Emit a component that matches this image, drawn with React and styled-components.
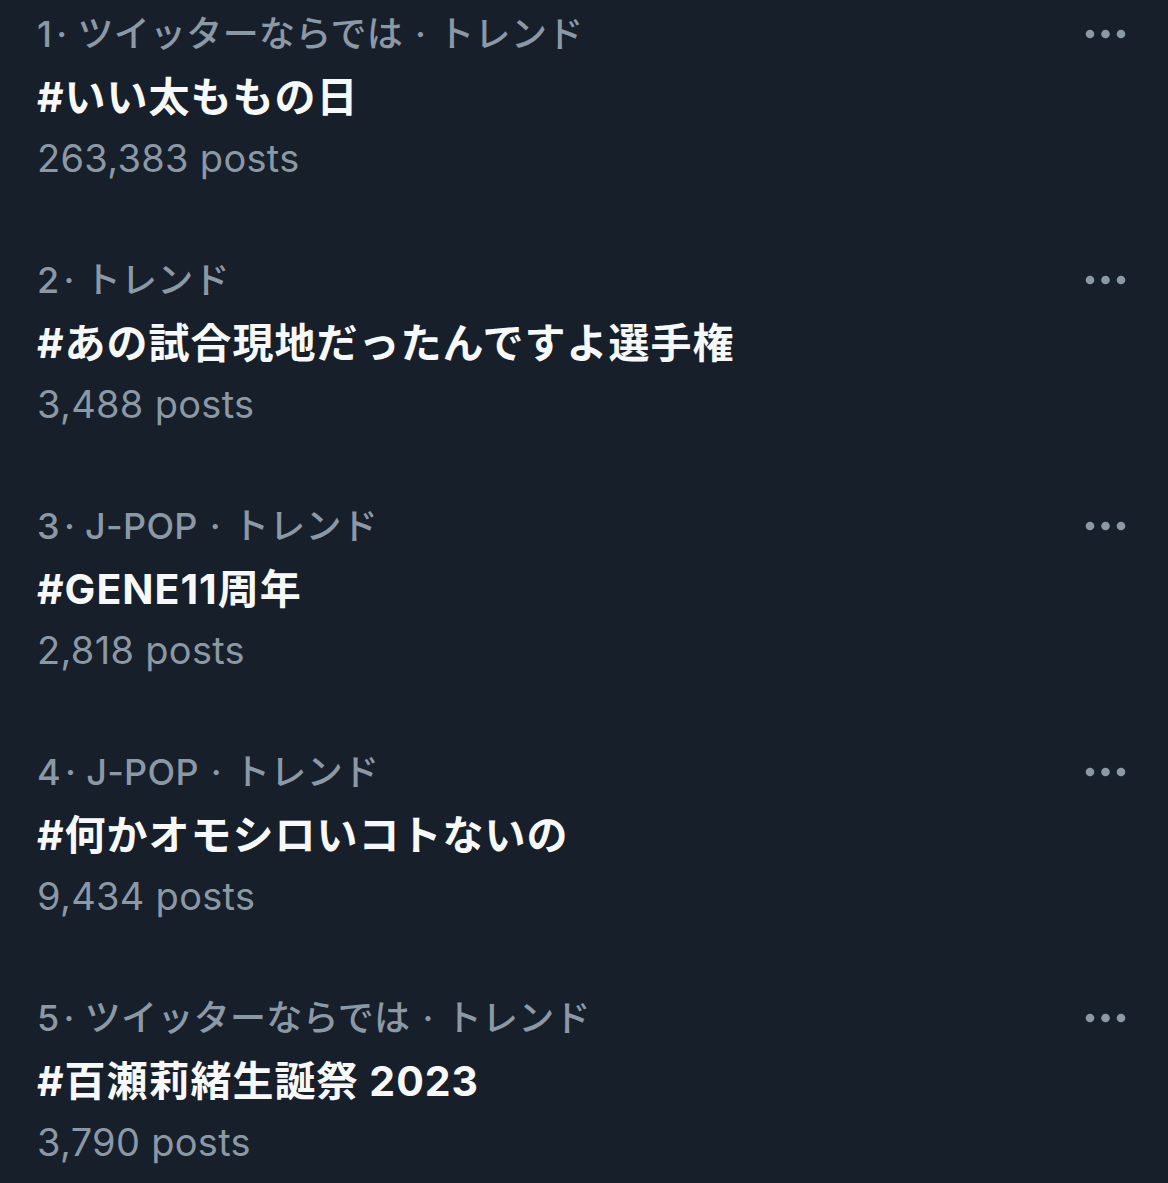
import React from 'react';
import styled, { createGlobalStyle } from 'styled-components';

const GlobalStyle = createGlobalStyle`
  html, body {
    margin: 0;
    padding: 0;
    background: #171f2a;
  }
  body {
    font-family: Inter, 'Noto Sans CJK JP', sans-serif;
    -webkit-font-smoothing: antialiased;
  }
`;

const Page = styled.div`
  width: 1168px;
  min-height: 1183px;
  background: #171f2a;
  overflow: hidden;
`;

const TrendList = styled.div`
  display: flex;
  flex-direction: column;
`;

const TrendItem = styled.div`
  height: 246px;
  box-sizing: border-box;
  padding: 2px 40px 0 37px;
  display: flex;
  flex-direction: column;
`;

const MetaRow = styled.div`
  display: flex;
  align-items: center;
  justify-content: space-between;
  height: 64px;
`;

const Meta = styled.span`
  display: flex;
  align-items: center;
  color: #8b98a5;
  font-size: 36px;
  font-weight: 500;
  letter-spacing: 0.3px;
  line-height: 64px;
  white-space: nowrap;
`;

const Dot = styled.span`
  margin: 0 ${({ $wide }) => ($wide ? '12px' : '10px')} 0 ${({ $wide }) => ($wide ? '12px' : '4px')};
`;

const MoreButton = styled.button`
  border: none;
  background: none;
  padding: 0;
  width: 44px;
  height: 20px;
  display: flex;
  align-items: center;
  justify-content: center;
  color: #8b98a5;
  cursor: pointer;
`;

const Title = styled.div`
  color: #f7f9f9;
  font-size: 41px;
  font-weight: 700;
  letter-spacing: 1px;
  line-height: 62px;
  white-space: nowrap;
`;

const Posts = styled.div`
  color: #8b98a5;
  font-size: 38px;
  font-weight: 400;
  letter-spacing: 0.3px;
  line-height: 60px;
`;

const MoreIcon = () => (
  <svg width="44" height="12" viewBox="0 0 44 12" fill="currentColor">
    <circle cx="6" cy="6" r="4.3" />
    <circle cx="21.5" cy="6" r="4.3" />
    <circle cx="37" cy="6" r="4.3" />
  </svg>
);

const trends = [
  { rank: 1, category: 'ツイッターならでは', title: '#いい太ももの日', posts: '263,383' },
  { rank: 2, category: null, title: '#あの試合現地だったんですよ選手権', posts: '3,488' },
  { rank: 3, category: 'J-POP', title: '#GENE11周年', posts: '2,818' },
  { rank: 4, category: 'J-POP', title: '#何かオモシロいコトないの', posts: '9,434' },
  { rank: 5, category: 'ツイッターならでは', title: '#百瀬莉緒生誕祭 2023', posts: '3,790' },
];

export default function App() {
  return (
    <Page>
      <GlobalStyle />
      <TrendList>
        {trends.map((t) => (
          <TrendItem key={t.rank}>
            <MetaRow>
              <Meta>
                {t.rank}
                <Dot>·</Dot>
                {t.category && (
                  <>
                    {t.category}
                    <Dot $wide>·</Dot>
                  </>
                )}
                トレンド
              </Meta>
              <MoreButton aria-label="More">
                <MoreIcon />
              </MoreButton>
            </MetaRow>
            <Title>{t.title}</Title>
            <Posts>{t.posts} posts</Posts>
          </TrendItem>
        ))}
      </TrendList>
    </Page>
  );
}
